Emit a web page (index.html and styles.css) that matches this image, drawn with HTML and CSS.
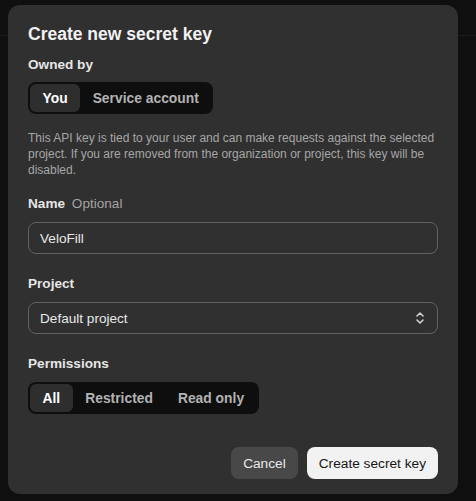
FILE: index.html
```
<!DOCTYPE html>
<html>
<head>
<meta charset="utf-8">
<link rel="stylesheet" href="styles.css">
</head>
<body>
<div class="topbar"></div>
<div class="dialog">
  <h1 class="title">Create new secret key</h1>
  <div class="label owned">Owned by</div>
  <div class="seg">
    <span class="seg-item active">You</span>
    <span class="seg-item">Service account</span>
  </div>
  <p class="desc">This API key is tied to your user and can make requests against the selected project. If you are removed from the organization or project, this key will be disabled.</p>
  <div class="label">Name <span class="optional">Optional</span></div>
  <div class="field">VeloFill</div>
  <div class="label section">Project</div>
  <div class="field select">
    <span>Default project</span>
    <svg class="chev" width="10" height="14" viewBox="0 0 10 14"><path d="M2 5 L5 2 L8 5 M2 9 L5 12 L8 9" fill="none" stroke="#cfcfcf" stroke-width="1.6" stroke-linecap="round" stroke-linejoin="round"/></svg>
  </div>
  <div class="label section">Permissions</div>
  <div class="seg">
    <span class="seg-item active">All</span>
    <span class="seg-item">Restricted</span>
    <span class="seg-item">Read only</span>
  </div>
  <div class="actions">
    <button class="btn cancel">Cancel</button>
    <button class="btn primary">Create secret key</button>
  </div>
</div>
</body>
</html>
```
FILE: styles.css
```
* { box-sizing: border-box; }
html, body { margin: 0; padding: 0; }
body {
  width: 476px;
  height: 501px;
  background: #0f0f0f;
  font-family: "Liberation Sans", Arial, sans-serif;
  color: #ececec;
  position: relative;
  overflow: hidden;
}
.topbar {
  height: 36px;
  border-bottom: 1px solid #1d1d1d;
}
.dialog {
  position: absolute;
  left: 8px;
  top: 5px;
  width: 450px;
  height: 489px;
  background: #303030;
  border-radius: 12px;
  padding: 17px 20px 15px;
  display: flex;
  flex-direction: column;
  align-items: flex-start;
}
.title {
  margin: 0;
  font-size: 17.5px;
  line-height: 24px;
  font-weight: 700;
  color: #f2f2f2;
}
.label {
  font-size: 13.6px;
  line-height: 20px;
  font-weight: 700;
  color: #e6e6e6;
  margin-bottom: 8px;
}
.label.owned { margin-top: 9px; margin-bottom: 7px; }
.label.section { margin-top: 20px; }
.optional {
  font-weight: 400;
  color: #a3a3a3;
  margin-left: 3px;
}
.seg {
  display: flex;
  height: 32px;
  padding: 2px;
  background: #0e0e0e;
  border-radius: 8px;
}
.seg-item {
  display: flex;
  align-items: center;
  padding: 0 12.5px;
  font-size: 13.85px;
  font-weight: 700;
  color: #b3b3b3;
  border-radius: 6px;
}
.seg-item.active {
  background: #2e2e2e;
  color: #ffffff;
}
.desc {
  margin: 16px 0 16px;
  font-size: 12px;
  line-height: 16px;
  color: #a6a6a6;
}
.field {
  width: 410px;
  height: 32px;
  border: 1px solid #626262;
  border-radius: 8px;
  padding: 0 11px;
  display: flex;
  align-items: center;
  font-size: 13.6px;
  color: #e8e8e8;
}
.select { justify-content: space-between; padding-right: 12px; }
.chev { display: block; }
.actions {
  margin-top: auto;
  align-self: flex-end;
  display: flex;
  gap: 9px;
}
.btn {
  height: 32px;
  border: none;
  border-radius: 8px;
  padding: 0 12px;
  font-family: "Liberation Sans", Arial, sans-serif;
  font-size: 13.7px;
}
.cancel { background: #484848; color: #e8e8e8; }
.primary { background: #f2f2f2; color: #161616; }
```
